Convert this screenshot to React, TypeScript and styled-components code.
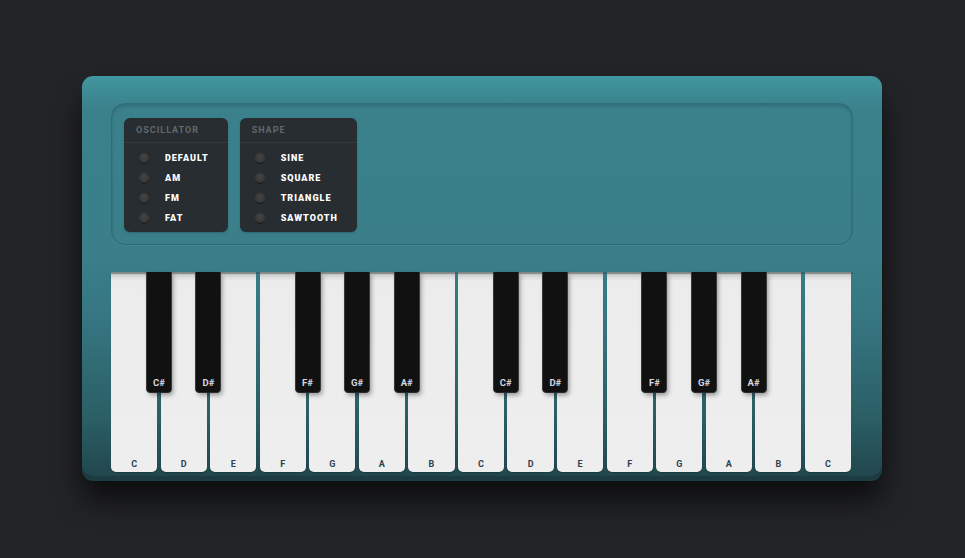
import React from "react";
import styled, { createGlobalStyle } from "styled-components";

const Global = createGlobalStyle`
  html, body { margin: 0; padding: 0; background: #232428; }
  body { font-family: Roboto, "Liberation Sans", sans-serif; }
`;

const Page = styled.div`
  width: 965px;
  height: 558px;
  padding-top: 76px;
  box-sizing: border-box;
  display: flex;
  justify-content: center;
  padding-right: 1px;
  overflow: hidden;
`;

const Body = styled.div`
  width: 800px;
  height: 400px;
  box-sizing: border-box;
  padding: 27px 29px 5px 29px;
  border-radius: 11px;
  background: linear-gradient(180deg, #41969f 0%, #3a818b 8%, #3a7f89 45%, #357580 62%, #2b5f66 85%, #21474d 100%);
  box-shadow: 0 5px 0 #1c3c41, 0 24px 30px rgba(0, 0, 0, 0.65);
  display: flex;
  flex-direction: column;
  gap: 27px;
`;

const Panel = styled.div`
  height: 142px;
  box-sizing: border-box;
  border-radius: 14px;
  border: 1px solid rgba(30, 80, 90, 0.4);
  box-shadow: inset 0 2px 3px rgba(20, 60, 70, 0.3), 0 1px 0 rgba(90, 160, 170, 0.2);
  padding: 14px 12px;
  display: flex;
  gap: 12px;
  align-items: flex-start;
`;

const Menu = styled.div`
  background: #272d31;
  border-radius: 6px;
  padding-bottom: 4px;
  box-shadow: 0 1px 2px rgba(0, 0, 0, 0.2);
`;

const MenuTitle = styled.div`
  height: 24px;
  line-height: 25px;
  padding: 0 12px;
  font-size: 9px;
  font-weight: 700;
  letter-spacing: 1px;
  color: #62686c;
  border-bottom: 1px solid #343b3f;
`;

const Options = styled.div`
  padding: 5px 19px 0 15px;
  display: flex;
  flex-direction: column;
`;

const Option = styled.div`
  height: 20px;
  display: flex;
  align-items: center;
  gap: 16px;
  font-size: 9px;
  font-weight: 900;
  letter-spacing: 1px;
  color: #ffffff;
`;

const Led = styled.span`
  width: 10px;
  height: 10px;
  border-radius: 50%;
  background: radial-gradient(circle at 50% 35%, #444 0%, #383838 60%, #303030 100%);
  box-shadow: 0 1px 0 rgba(0, 0, 0, 0.5);
  flex: none;
`;

const Keyboard = styled.div`
  position: relative;
  width: 742px;
  height: 200px;
`;

const Whites = styled.div`
  display: grid;
  grid-template-columns: repeat(15, 1fr);
  column-gap: 3.4px;
  width: 740px;
  height: 200px;
`;

const WhiteKey = styled.div`
  background: linear-gradient(180deg, #a9a9a9 0px, #d6d6d6 4px, #ececec 9px, #eeeeee 100%);
  border-radius: 0 0 5px 5px;
  display: flex;
  align-items: flex-end;
  justify-content: center;
  padding-bottom: 3px;
  box-sizing: border-box;
  font-size: 9px;
  font-weight: 700;
  color: #2f3e52;
  box-shadow: 0 1px 1px rgba(0, 0, 0, 0.2);
`;

const TopEdge = styled.div`
  position: absolute;
  left: 0;
  top: 0;
  width: 742px;
  height: 2px;
  background: rgba(40, 60, 65, 0.35);
`;

const BlackKey = styled.div`
  position: absolute;
  top: 0;
  width: 24px;
  height: 120px;
  background: #111111;
  border-radius: 0 0 3px 3px;
  box-shadow: 1px 0 0 #3a3a3a, -1px 0 0 #3a3a3a, 0 1px 0 #2a2a2a, 2px 3px 5px rgba(0, 0, 0, 0.4);
  display: flex;
  align-items: flex-end;
  justify-content: center;
  padding-bottom: 4px;
  box-sizing: border-box;
  font-size: 9.5px;
  font-weight: 700;
  color: #d5d8e0;
`;

const whites = ["C", "D", "E", "F", "G", "A", "B", "C", "D", "E", "F", "G", "A", "B", "C"];
const blacks: [string, number][] = [
  ["C#", 1], ["D#", 2], ["F#", 4], ["G#", 5], ["A#", 6],
  ["C#", 8], ["D#", 9], ["F#", 11], ["G#", 12], ["A#", 13],
];

const pitch = (740 + 3.4) / 15;

export default function App() {
  return (
    <>
      <Global />
      <Page>
        <Body>
          <Panel>
            <Menu>
              <MenuTitle>OSCILLATOR</MenuTitle>
              <Options>
                {["DEFAULT", "AM", "FM", "FAT"].map((o) => (
                  <Option key={o}>
                    <Led />
                    {o}
                  </Option>
                ))}
              </Options>
            </Menu>
            <Menu>
              <MenuTitle>SHAPE</MenuTitle>
              <Options>
                {["SINE", "SQUARE", "TRIANGLE", "SAWTOOTH"].map((o) => (
                  <Option key={o}>
                    <Led />
                    {o}
                  </Option>
                ))}
              </Options>
            </Menu>
          </Panel>
          <Keyboard>
            <Whites>
              {whites.map((n, i) => (
                <WhiteKey key={i}>{n}</WhiteKey>
              ))}
            </Whites>
            <TopEdge />
            {blacks.map(([n, b], i) => (
              <BlackKey key={i} style={{ left: b * pitch - 1.7 - 12 }}>
                {n}
              </BlackKey>
            ))}
          </Keyboard>
        </Body>
      </Page>
    </>
  );
}
